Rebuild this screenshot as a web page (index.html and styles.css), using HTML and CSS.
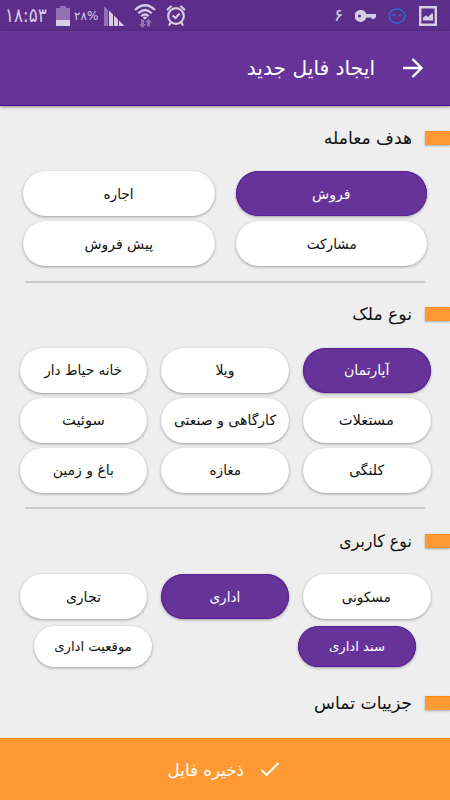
FILE: index.html
```html
<!DOCTYPE html>
<html lang="fa" dir="rtl">
<head>
<meta charset="utf-8">
<title>ایجاد فایل جدید</title>
<link rel="stylesheet" href="styles.css">
</head>
<body>
<div class="status" dir="ltr">
  <div class="status-group">
    <span class="clock"><span class="t">۱۸:۵۳</span></span>
    <svg class="battery" width="14" height="20" viewBox="0 0 14 20"><path fill="#9272b3" d="M4 0h6v2h4v13H0V2h4z"/><path fill="#d8cce4" d="M0 14h14v6H0z"/></svg>
    <span class="percent">۲۸%</span>
    <svg class="signal" width="21" height="21" viewBox="0 0 21 21"><path fill="#9272b3" d="M0 1l4 4v16H0z"/><path fill="#d8cce4" d="M5 5.500l4 4V21H5zM10 10.500l4 4V21h-4zM15 15.500l5.500 5.500H15z"/></svg>
    <svg class="wifi" width="22" height="24" viewBox="0 0 22 24"><g fill="none" stroke="#d8cce4" stroke-width="2.200"><path d="M1 6Q11-3.500 21 6M4.300 9.200Q11 2.800 17.700 9.200M7.300 12.200Q11 8.800 14.700 12.200"/></g><path fill="#d8cce4" d="M8.800 13.500Q11 11.700 13.200 13.500L11 15.700z"/><path fill="#9272b3" d="M7 15.500h3V20h2l-3.500 4L5 20h2zM13 22.500v-4h-2l3.500-4 3.500 4h-2v4z"/></svg>
    <svg class="alarm" width="20" height="21" viewBox="0 0 20 21"><g fill="none" stroke="#d8cce4" stroke-width="2.200"><circle cx="10" cy="11" r="7.800"/><path d="M1 5l4.500-4M19 5l-4.500-4M5 17l-2 3.500M15 17l2 3.500M6.500 10.500l3 2.500 4-4.500"/></g></svg>
  </div>
  <div class="status-group">
    <span class="count">۶</span>
    <svg class="key" width="22" height="12" viewBox="0 0 22 12"><path fill="#d8cce4" fill-rule="evenodd" d="M6 0a6 6 0 0 1 5.300 4H21v3.500h-1.500V9h-3V7.500h-5.200A6 6 0 1 1 6 0zM4.500 4.500a1.500 1.500 0 1 0 .01 0z"/></svg>
    <svg class="face" width="18" height="16" viewBox="0 0 18 16"><g fill="none" stroke="#2f6cd0" stroke-width="1.300"><ellipse cx="9" cy="8" rx="8" ry="7"/><path d="M3.700 8.300q1.800-3.200 3.600 0M10.700 8.300q1.800-3.200 3.600 0"/></g></svg>
    <svg class="photo" width="18" height="20" viewBox="0 0 18 20"><path fill="none" stroke="#d8cce4" stroke-width="2.400" d="M1.200 1.200h15.600v17.600H1.200z"/><path fill="#d8cce4" d="M4 14.500v-3l3-2 2 1.500 4-4 1 1v6.500z"/></svg>
  </div>
</div>
<header class="appbar">
  <svg class="back" width="22" height="20" viewBox="0 0 22 20"><path fill="none" stroke="#fff" stroke-width="2.400" d="M1 10h18M10.500 1l9 9-9 9"/></svg>
  <h1><span class="t">ایجاد فایل جدید</span></h1>
</header>
<main>
  <section class="deal">
    <h2><span class="t">هدف معامله</span></h2>
    <div class="grid two">
      <button class="on"><span class="t">فروش</span></button><button><span class="t narrow">اجاره</span></button>
      <button><span class="t narrow">مشارکت</span></button><button><span class="t">پیش فروش</span></button>
    </div>
  </section>
  <section class="estate">
    <h2><span class="t">نوع ملک</span></h2>
    <div class="grid three">
      <button class="on"><span class="t">آپارتمان</span></button><button><span class="t">ویلا</span></button><button><span class="t narrow">خانه حیاط دار</span></button>
      <button><span class="t wide">مستغلات</span></button><button><span class="t">کارگاهی و صنعتی</span></button><button><span class="t wide">سوئیت</span></button>
      <button><span class="t">کلنگی</span></button><button><span class="t narrow">مغازه</span></button><button><span class="t">باغ و زمین</span></button>
    </div>
  </section>
  <section class="usage">
    <h2><span class="t tight">نوع کاربری</span></h2>
    <div class="grid three">
      <button><span class="t narrow">مسکونی</span></button><button class="on"><span class="t narrow">اداری</span></button><button><span class="t">تجاری</span></button>
    </div>
    <div class="sub">
      <button class="on"><span class="t">سند اداری</span></button><button><span class="t">موقعیت اداری</span></button>
    </div>
  </section>
  <section class="contact">
    <h2><span class="t">جزییات تماس</span></h2>
  </section>
</main>
<footer>
  <svg width="20" height="15" viewBox="0 0 20 15"><path fill="none" stroke="#fff" stroke-width="2" d="M1.500 8l5 5L18.500 1"/></svg>
  <span class="t">ذخیره فایل</span>
</footer>
</body>
</html>
```
FILE: styles.css
```css
* { box-sizing: border-box; }
body { margin: 0; width: 450px; height: 800px; overflow: hidden; display: flex; flex-direction: column; background: #eee; color: #111; font-family: "DejaVu Sans", sans-serif; }
svg { display: block; flex: none; }
h1, h2 { margin: 0; font-weight: 400; }
.t { display: inline-block; white-space: nowrap; }
.narrow { transform: scaleX(.97); }
.wide { transform: scaleX(1.05); }
.tight { transform: scaleX(.92); transform-origin: right; }
.status { height: 31px; flex: none; background: #5c2e89; color: #d8cce4; display: flex; justify-content: space-between; padding: 0 13px 0 5px; }
.status-group { display: flex; align-items: center; }
.clock { width: 51px; font-size: 17.500px; }
.clock .t { transform: scale(.96, 1.12); transform-origin: left center; }
.clock, .percent, .count { line-height: 1; }
.percent { width: 30px; font-size: 12px; margin-left: 4px; }
.wifi { margin-left: 9px; }
.alarm { margin-left: 10px; }
.count { font-size: 17px; width: 21px; }
.face { margin-left: 11px; }
.photo { margin-left: 13px; }
.appbar { height: 75px; flex: none; background: #639; border-bottom: 1px solid #4b0a8f; box-shadow: 0 1px 3px rgba(0,0,0,.4); color: #fff; display: flex; align-items: center; padding-right: 26px; z-index: 1; }
.appbar h1 { font-size: 20.200px; margin-right: 27px; }
main { flex: 1; min-height: 0; overflow: hidden; }
h2 { display: flex; align-items: center; height: 13px; font-size: 17.200px; }
h2::before { content: ""; width: 25px; height: 13px; background: #f93; border-top: 1px solid #ff8c0a; box-shadow: 0 1px 2px rgba(0,0,0,.3); margin-left: 13px; }
.deal { height: 176px; padding-top: 25px; }
.estate { height: 227px; padding-top: 25px; }
.usage { height: 163px; padding-top: 25px; }
.contact { padding-top: 24px; }
.deal, .estate { position: relative; }
.deal::after, .estate::after { content: ""; position: absolute; left: 25px; right: 25px; bottom: 0; height: 2px; background: #ccc; }
.deal::after { bottom: -1px; }
.grid { display: grid; row-gap: 5px; grid-auto-rows: 45px; margin-top: 27px; }
.two { grid-template-columns: 1fr 1fr; column-gap: 21px; padding: 0 23px; }
.three { grid-template-columns: repeat(3, 1fr); column-gap: 14px; padding: 0 19.500px; }
.estate .grid { margin-top: 27.500px; }
button { border: 0; border-radius: 23px; background: #fff; color: #111; box-shadow: 0 1px 3px rgba(0,0,0,.35); font: 14px "DejaVu Sans", sans-serif; padding: 0; display: flex; align-items: center; justify-content: center; }
button.on { background: #639; color: #fff; box-shadow: inset 0 0 0 1px #5c2298, 0 1px 3px rgba(0,0,0,.35); }
.sub { display: flex; justify-content: space-between; padding: 0 34px; margin-top: 7px; }
.sub button { width: 118px; height: 41px; font-size: 13.200px; }
footer { height: 62px; flex: none; background: #f93; border-top: 1px solid #ff8c0a; color: #fff; display: flex; align-items: center; padding-right: 170px; gap: 16px; font-size: 16.700px; }
```
